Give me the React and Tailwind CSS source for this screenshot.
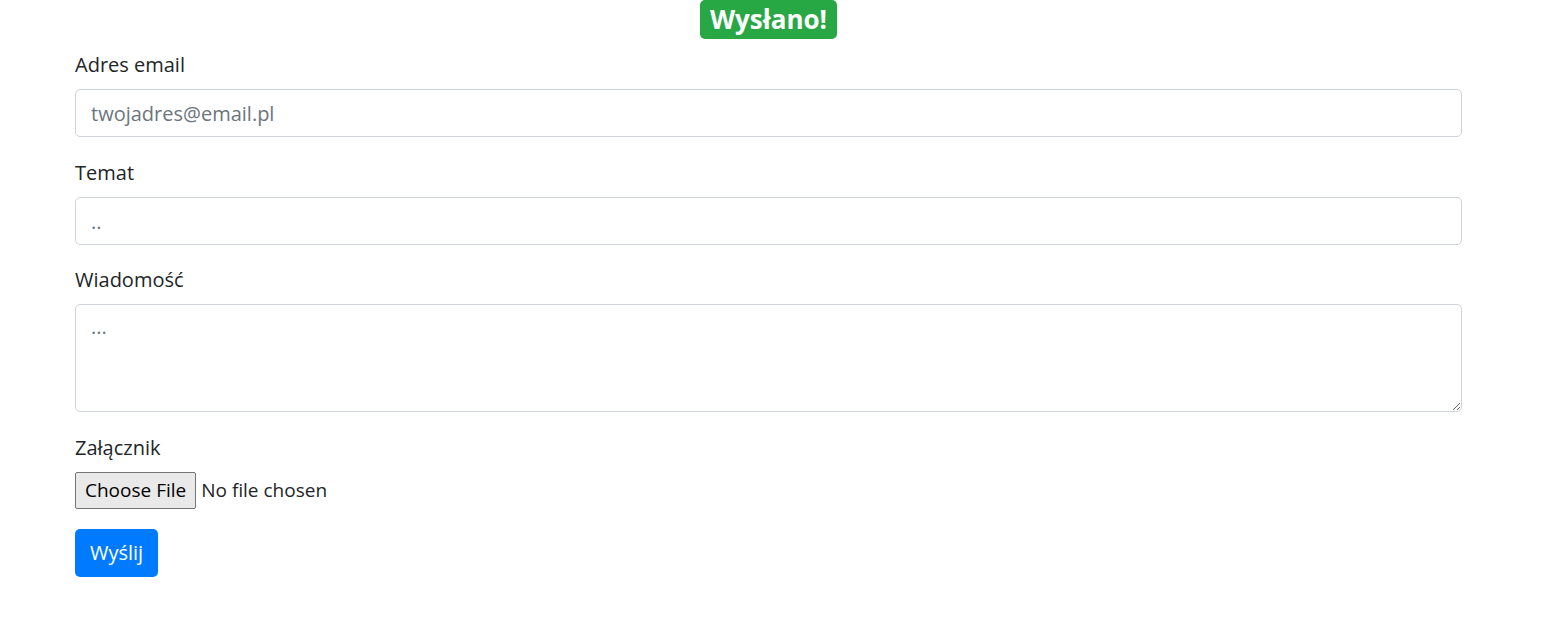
const fieldClass =
  'block w-full h-[48px] px-[15px] border border-[#ced4da] rounded-[5px] text-[20px] leading-[30px] text-[#495057] placeholder:text-[#6c757d] outline-none';

const labelClass = 'block text-[20px] leading-[30px] pt-[1px] mb-[9px]';

const App = () => {
  return (
    <div className="min-h-screen bg-white text-[#212529] font-['Open_Sans',sans-serif]">
      <form className="ml-[75px] w-[1387px]" onSubmit={(e) => e.preventDefault()}>
        <h3 className="text-center h-[39px]">
          <span className="inline-block bg-[#28a745] text-white font-bold text-[26px] leading-[39px] px-[10px] rounded-[5px]">
            Wysłano!
          </span>
        </h3>

        <div className="mt-[10px] mb-[20px]">
          <label className={labelClass}>Adres email</label>
          <input type="email" className={fieldClass} placeholder="twojadres@email.pl" />
        </div>

        <div className="mb-[19px]">
          <label className={labelClass}>Temat</label>
          <input type="text" className={fieldClass} placeholder=".." />
        </div>

        <div className="mb-[20px]">
          <label className={labelClass}>Wiadomość</label>
          <textarea
            rows={3}
            className="block w-full h-[108px] px-[15px] py-[7px] border border-[#ced4da] rounded-[5px] text-[20px] leading-[30px] text-[#495057] placeholder:text-[#6c757d] outline-none"
            placeholder="..."
          />
        </div>

        <div className="mb-[20px]">
          <label className={labelClass}>Załącznik</label>
          <div className="flex items-center h-[37px] text-[19px]">
            <span className="flex items-center h-[37px] px-[9px] bg-[#e9e9e9] border border-[#767676] rounded-[2px] text-black">
              Choose File
            </span>
            <span className="ml-[5px]">No file chosen</span>
          </div>
        </div>

        <button
          type="submit"
          className="h-[48px] px-[15px] bg-[#007bff] text-white text-[20px] leading-[30px] rounded-[5px]"
        >
          Wyślij
        </button>
      </form>
    </div>
  );
};

export default App;
